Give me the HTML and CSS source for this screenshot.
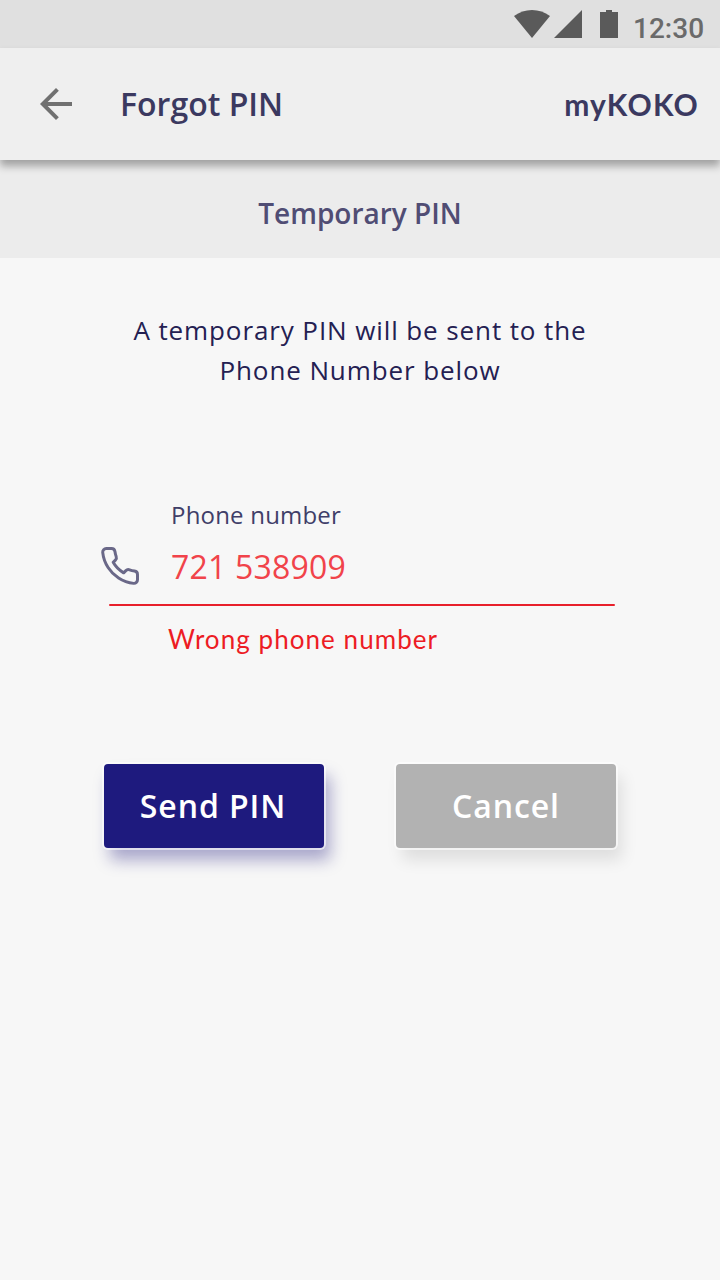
FILE: index.html
```html
<!DOCTYPE html>
<html lang="en">
<head>
<meta charset="utf-8">
<title>Forgot PIN</title>
<link rel="stylesheet" href="styles.css">
</head>
<body>
<div class="status">
  <svg class="status-icons" width="108" height="48" viewBox="0 0 108 48" fill="#5a5a5a">
    <path d="M0 16Q8 10 18 10T36 16L18 38Z"/>
    <path d="M40 38H68V10Z"/>
    <path d="M86 12H92V10H98V12H104V38H86Z"/>
  </svg>
  <span class="clock">12:30</span>
</div>
<header class="appbar">
  <svg class="back" width="32" height="32" viewBox="0 0 32 32" fill="#707070"><path d="M32 14H7.66L18.84 2.82 16 0 0 16 16 32 18.82 29.18 7.66 18H32Z"/></svg>
  <h1 class="title">Forgot PIN</h1>
  <span class="brand">myKOKO</span>
</header>
<h2 class="subtitle"><span>Temporary PIN</span></h2>
<main class="content">
  <p class="intro">A temporary PIN will be sent to the<br>Phone Number below</p>
  <div class="field">
    <svg class="phone" width="42" height="42" viewBox="0 0 24 24" fill="none" stroke="#6a6888" stroke-width="1.7" stroke-linecap="round" stroke-linejoin="round"><path d="M22 16.92v3a2 2 0 0 1-2.18 2 19.79 19.79 0 0 1-8.63-3.07 19.5 19.5 0 0 1-6-6 19.79 19.79 0 0 1-3.07-8.67A2 2 0 0 1 4.11 2h3a2 2 0 0 1 2 1.72 12.84 12.84 0 0 0 .7 2.81 2 2 0 0 1-.45 2.11L8.09 9.91a16 16 0 0 0 6 6l1.27-1.27a2 2 0 0 1 2.11-.45 12.84 12.84 0 0 0 2.81.7A2 2 0 0 1 22 16.92z"/></svg>
    <div class="field-text">
      <label class="label">Phone number</label>
      <span class="value">721 538909</span>
    </div>
  </div>
  <div class="rule"></div>
  <p class="error">Wrong phone number</p>
  <div class="actions">
    <button class="btn primary">Send PIN</button>
    <button class="btn muted">Cancel</button>
  </div>
</main>
</body>
</html>
```
FILE: styles.css
```css
* { box-sizing: border-box; }
body {
  margin: 0;
  height: 1280px;
  background: #f7f7f7;
  font-family: "Open Sans", sans-serif;
}
h1, h2, p { margin: 0; }
.status {
  display: flex;
  height: 48px;
  padding-left: 514px;
  background: #e0e0e0;
}
.clock {
  margin: 9px 0 0 11px;
  color: #6a6a6a;
  font: 500 28px/40px Roboto, sans-serif;
}
.appbar {
  position: relative;
  display: flex;
  height: 112px;
  padding: 0 21px 0 40px;
  background: #efefef;
  box-shadow: 0 6px 8px rgba(0, 0, 0, .32);
}
.back { margin-top: 40px; }
.title {
  margin: 32px auto 0 48px;
  color: #3b3960;
  font-size: 32px;
  font-weight: 600;
  line-height: 48px;
}
.brand {
  margin-top: 33px;
  color: #3b3960;
  font: 700 30px/46px Lato, sans-serif;
  letter-spacing: 1.2px;
}
.subtitle {
  height: 98px;
  padding-top: 33px;
  background: #ececec;
  color: #504d74;
  font-size: 28px;
  font-weight: 600;
  line-height: 41px;
  text-align: center;
}
.content { padding-top: 52px; }
.intro {
  color: #242052;
  font-size: 26px;
  line-height: 40px;
  letter-spacing: .9px;
  text-align: center;
}
.field {
  display: flex;
  align-items: flex-end;
  height: 214px;
  padding-left: 99px;
}
.phone { margin-bottom: 17px; }
.field-text {
  display: flex;
  flex-direction: column;
  margin-left: 30px;
}
.label {
  color: #403e68;
  font-size: 24px;
  line-height: 34px;
  letter-spacing: .2px;
}
.value {
  padding-top: 6px;
  padding-bottom: 8px;
  color: #f1434a;
  font-size: 32px;
  line-height: 58px;
  letter-spacing: .2px;
}
.rule {
  width: 506px;
  height: 2px;
  margin-left: 109px;
  border-radius: 1px;
  background: #e8202b;
}
.error {
  margin: 13px 0 0 168px;
  color: #ed1c24;
  font: 400 26px/40px Lato, sans-serif;
  letter-spacing: 1.06px;
}
.actions {
  display: flex;
  gap: 72px;
  padding: 105px 0 0 104px;
}
.btn {
  width: 220px;
  height: 84px;
  padding: 0;
  border: 0;
  border-radius: 4px;
  color: #fff;
  font: 600 32px/84px "Open Sans", sans-serif;
  letter-spacing: .9px;
}
.primary {
  padding-right: 2px;
  background: #1e1a7e;
  box-shadow: 0 0 0 2px rgba(255, 255, 255, .6), 6px 12px 16px rgba(30, 26, 126, .36);
}
.muted {
  background: #b2b2b2;
  box-shadow: 0 0 0 2px rgba(255, 255, 255, .6), 6px 12px 16px rgba(0, 0, 0, .1);
}
```
